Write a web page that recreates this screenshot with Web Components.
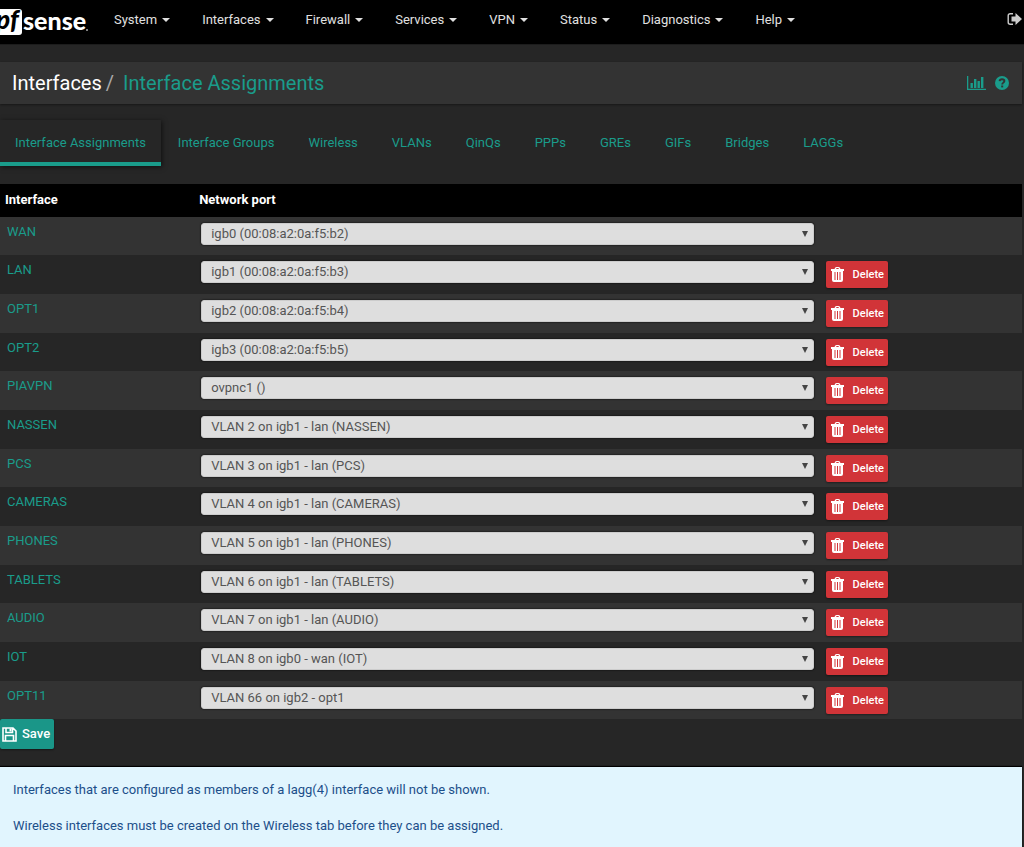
<!DOCTYPE html>
<html lang="en">
<head>
<meta charset="utf-8">
<meta name="viewport" content="width=device-width, initial-scale=1">
<title>Interfaces: Interface Assignments</title>
<style>
  html {
    background: #262626;
  }

  body {
    margin: 0;
    font-family: Roboto, "Liberation Sans", sans-serif;
    font-size: 13px;
    line-height: 18px;
    color: #fff;
    background: #262626;
    overflow-x: hidden;
    --teal: #1a9c8b;
    --panel: #333;
    --red: #d13438;
  }
</style>
</head>
<body>
  <pf-navbar></pf-navbar>

  <pf-page>
    <pf-breadcrumb slot="heading" section="Interfaces" page="Interface Assignments"></pf-breadcrumb>
    <pf-tabs slot="tabs"></pf-tabs>
    <pf-assignments></pf-assignments>
    <pf-button kind="save">Save</pf-button>
    <pf-infobox slot="notes">
      <p>Interfaces that are configured as members of a lagg(4) interface will not be shown.</p>
      <p>Wireless interfaces must be created on the Wireless tab before they can be assigned.</p>
    </pf-infobox>
  </pf-page>

<script>
const RESET = `
  * {
    box-sizing: border-box;
    margin: 0;
    padding: 0;
  }

  a {
    color: inherit;
    text-decoration: none;
  }

  ul {
    list-style: none;
  }

  svg {
    display: block;
    fill: currentColor;
  }
`;

class PfLogo extends HTMLElement {
  constructor() {
    super();
    this.attachShadow({ mode: "open" });
  }

  connectedCallback() {
    this.shadowRoot.innerHTML = `
      <style>
        ${RESET}
        :host {
          display: block;
          width: 92px;
          height: 44px;
        }

        a, svg {
          display: block;
        }

        text {
          font-family: Lato, "Open Sans", sans-serif;
          font-weight: 900;
        }
      </style>
      <a href="#" aria-label="pfsense">
        <svg width="92" height="44" viewBox="0 0 92 44">
          <path fill="#fff" d="M0 9h19q3 0 3 3v20q0 3-3 3H0z"/>
          <text x="-4" y="29" font-size="26" font-style="italic" fill="#000">pf</text>
          <text x="23" y="30" font-size="25" fill="#fff">sense</text>
          <circle cx="87" cy="30" r="1" fill="#aaa"/>
        </svg>
      </a>
    `;
  }
}

class PfNavbar extends HTMLElement {
  constructor() {
    super();
    this.attachShadow({ mode: "open" });
    this.items = ["System", "Interfaces", "Firewall", "Services", "VPN", "Status", "Diagnostics", "Help"];
  }

  connectedCallback() {
    this.shadowRoot.innerHTML = `
      <style>
        ${RESET}
        :host {
          display: block;
          background: #000;
          color: #e0e0e0;
          border-bottom: 1px solid #1c1c1c;
        }

        nav {
          display: flex;
          align-items: flex-start;
          height: 44px;
        }

        ul {
          display: flex;
          flex: 1;
          padding-left: 6px;
        }

        li a {
          display: flex;
          align-items: center;
          gap: 5px;
          padding: 11px 16px;
        }

        .caret {
          border: 4px solid transparent;
          border-top-color: currentColor;
          border-bottom: 0;
          width: 0;
        }

        .logout {
          padding: 12px 2px 0 0;
          color: #ccc;
        }
      </style>
      <nav>
        <pf-logo></pf-logo>
        <ul>
          ${this.items.map((item) => `<li><a href="#">${item}<span class="caret"></span></a></li>`).join("")}
        </ul>
        <a class="logout" href="#" aria-label="Logout">
          <svg width="15" height="14" viewBox="0 0 15 14">
            <path fill="none" stroke="currentColor" stroke-width="1.4" d="M6 1.7H3.2Q1.2 1.7 1.2 3.7v6.6q0 2 2 2H6"/>
            <path d="M4.500 4.600h4V1L15 7l-6.500 6V9.400h-4z"/>
          </svg>
        </a>
      </nav>
    `;
  }
}

class PfPage extends HTMLElement {
  constructor() {
    super();
    this.attachShadow({ mode: "open" });
  }

  connectedCallback() {
    this.shadowRoot.innerHTML = `
      <style>
        ${RESET}
        :host {
          display: block;
          margin-right: 2px;
        }

        header {
          padding-top: 17px;
        }

        .tabs {
          padding-top: 16px;
        }

        .body {
          padding: 18px 0;
        }
      </style>
      <header><slot name="heading"></slot></header>
      <div class="tabs"><slot name="tabs"></slot></div>
      <main class="body"><slot></slot></main>
      <slot name="notes"></slot>
    `;
  }
}

class PfBreadcrumb extends HTMLElement {
  constructor() {
    super();
    this.attachShadow({ mode: "open" });
  }

  connectedCallback() {
    this.shadowRoot.innerHTML = `
      <style>
        ${RESET}
        :host {
          display: flex;
          align-items: center;
          justify-content: space-between;
          height: 42px;
          padding: 0 13px 0 12px;
          background: var(--panel);
          box-shadow: 0 1px 2px rgba(0, 0, 0, 0.4);
        }

        h1 {
          display: flex;
          font-size: 20px;
          font-weight: 400;
          line-height: 28px;
        }

        .sep {
          color: #aaa;
          padding: 0 9px 0 4px;
        }

        .page, .icons {
          color: var(--teal);
        }

        .icons {
          display: flex;
          align-items: center;
          gap: 9px;
        }
      </style>
      <h1>
        <span>${this.getAttribute("section")}</span>
        <span class="sep">/</span>
        <a class="page" href="#">${this.getAttribute("page")}</a>
      </h1>
      <div class="icons">
        <a href="#" aria-label="Status">
          <svg width="19" height="14" viewBox="0 0 19 14">
            <path d="M0 0h1.300v12.700H19V14H0zM3.500 7h2.400v5H3.500zM7 3h2.400v9H7zM10.500 5h2.400v7h-2.400zM14 1h2.400v11H14z"/>
          </svg>
        </a>
        <a href="#" aria-label="Help">
          <svg width="14" height="14" viewBox="0 0 14 14">
            <circle cx="7" cy="7" r="7"/>
            <path fill="none" stroke="#333" stroke-width="1.900" d="M4.600 5.200C4.800 3.700 5.800 3.200 7 3.200c1.400 0 2.400.8 2.400 1.900C9.400 6.600 7.200 6.700 7.200 8.500"/>
            <path fill="#333" d="M6.200 9.500h2v1.900h-2z"/>
          </svg>
        </a>
      </div>
    `;
  }
}

class PfTabs extends HTMLElement {
  constructor() {
    super();
    this.attachShadow({ mode: "open" });
    this.tabs = ["Interface Assignments", "Interface Groups", "Wireless", "VLANs", "QinQs", "PPPs", "GREs", "GIFs", "Bridges", "LAGGs"];
  }

  connectedCallback() {
    this.shadowRoot.innerHTML = `
      <style>
        ${RESET}
        :host {
          display: block;
          color: var(--teal);
        }

        ul {
          display: flex;
        }

        li a {
          display: block;
          padding: 14px 17px 10px;
          border-bottom: 4px solid transparent;
        }

        li:first-child a {
          padding-left: 15px;
          padding-right: 15px;
          border-bottom-color: var(--teal);
          box-shadow: 1px 1px 5px rgba(0, 0, 0, 0.6);
        }
      </style>
      <ul>
        ${this.tabs.map((tab) => `<li><a href="#">${tab}</a></li>`).join("")}
      </ul>
    `;
  }
}

class PfButton extends HTMLElement {
  constructor() {
    super();
    this.attachShadow({ mode: "open" });
  }

  connectedCallback() {
    const icons = {
      save: `
        <svg width="15" height="15" viewBox="0 0 15 15">
          <path fill="none" stroke="currentColor" stroke-width="1.600" d="M1 1h10l3 3v10H1zM3.500 14V8.500h8V14M4 1v4.500h6.500V1"/>
          <path d="M7.500 1.500h2v3h-2z"/>
        </svg>`,
      delete: `
        <svg width="13" height="15" viewBox="0 0 13 15">
          <path fill-rule="evenodd" d="M3.500 2q.5-2 2-2h2q1.500 0 2 2H13v2h-1v9q0 2-2 2H3q-2 0-2-2V4H0V2zM5 2h3q-.3-1-1-1H6q-.7 0-1 1zM3.500 5v8h1V5zM6 5v8h1V5zM8.500 5v8h1V5z"/>
        </svg>`
    };
    const kind = this.getAttribute("kind");

    this.shadowRoot.innerHTML = `
      <style>
        ${RESET}
        :host {
          display: block;
        }

        button {
          display: flex;
          align-items: center;
          border: 0;
          border-radius: 2px;
          color: #fff;
          font-family: inherit;
          font-weight: 500;
          line-height: 18px;
          box-shadow: 0 1px 2px rgba(0, 0, 0, 0.4);
        }

        .save {
          gap: 5px;
          height: 30px;
          padding: 0 4px 0 2px;
          font-size: 13px;
          background: #1a9688;
        }

        .delete {
          gap: 9px;
          height: 27px;
          padding: 0 4px 0 5px;
          font-size: 11px;
          background: var(--red);
        }
      </style>
      <button type="button" class="${kind}">${icons[kind]}<slot></slot></button>
    `;
  }
}

class PfAssignments extends HTMLElement {
  constructor() {
    super();
    this.attachShadow({ mode: "open" });
    this.rows = [
      ["WAN", "igb0 (00:08:a2:0a:f5:b2)"],
      ["LAN", "igb1 (00:08:a2:0a:f5:b3)"],
      ["OPT1", "igb2 (00:08:a2:0a:f5:b4)"],
      ["OPT2", "igb3 (00:08:a2:0a:f5:b5)"],
      ["PIAVPN", "ovpnc1 ()"],
      ["NASSEN", "VLAN 2 on igb1 - lan (NASSEN)"],
      ["PCS", "VLAN 3 on igb1 - lan (PCS)"],
      ["CAMERAS", "VLAN 4 on igb1 - lan (CAMERAS)"],
      ["PHONES", "VLAN 5 on igb1 - lan (PHONES)"],
      ["TABLETS", "VLAN 6 on igb1 - lan (TABLETS)"],
      ["AUDIO", "VLAN 7 on igb1 - lan (AUDIO)"],
      ["IOT", "VLAN 8 on igb0 - wan (IOT)"],
      ["OPT11", "VLAN 66 on igb2 - opt1"]
    ];
  }

  row([name, port], index) {
    const id = name.toLowerCase();
    return `
      <tr>
        <td><a id="${id}" href="#">${name}</a></td>
        <td>
          <div class="select">
            <select aria-labelledby="${id}"><option>${port}</option></select>
            <svg width="6" height="6" viewBox="0 0 6 6"><path d="M0 0h6L3 6z"/></svg>
          </div>
        </td>
        <td>${index === 0 ? "" : `<pf-button kind="delete">Delete</pf-button>`}</td>
      </tr>
    `;
  }

  connectedCallback() {
    this.shadowRoot.innerHTML = `
      <style>
        ${RESET}
        :host {
          display: block;
        }

        table {
          width: 100%;
          table-layout: fixed;
          border-collapse: collapse;
        }

        .name {
          width: 19%;
        }

        .action {
          width: 20%;
        }

        th {
          height: 33px;
          padding: 0 5px 2px;
          background: #000;
          font-weight: 700;
          text-align: left;
        }

        td {
          height: 39px;
          padding: 6px 4px 0 7px;
          vertical-align: top;
        }

        td:last-child {
          padding-left: 8px;
        }

        tbody tr:nth-child(3n + 1) td {
          height: 38px;
        }

        tbody tr:nth-child(odd) td {
          background: var(--panel);
        }

        td a {
          color: var(--teal);
        }

        .select {
          display: grid;
          align-items: center;
          color: #444;
        }

        select {
          grid-area: 1 / 1;
          appearance: none;
          width: 100%;
          height: 22px;
          padding: 0 9px;
          border: 1px solid #ccc;
          border-radius: 3px;
          background: #dedede;
          color: #555;
          font: inherit;
          box-shadow: 0 0 2px #000;
        }

        .select svg {
          grid-area: 1 / 1;
          justify-self: end;
          margin-right: 6px;
          pointer-events: none;
        }
      </style>
      <table>
        <colgroup>
          <col class="name">
          <col>
          <col class="action">
        </colgroup>
        <thead>
          <tr><th>Interface</th><th>Network port</th><th></th></tr>
        </thead>
        <tbody>
          ${this.rows.map((row, i) => this.row(row, i)).join("")}
        </tbody>
      </table>
    `;
  }
}

class PfInfobox extends HTMLElement {
  constructor() {
    super();
    this.attachShadow({ mode: "open" });
  }

  connectedCallback() {
    this.shadowRoot.innerHTML = `
      <style>
        :host {
          display: block;
          padding: 14px 13px;
          background: #e1f5fe;
          color: #1c4f8a;
          box-shadow: 0 -1px 1px #000;
        }

        ::slotted(p) {
          margin: 0 0 18px;
        }
      </style>
      <slot></slot>
    `;
  }
}

customElements.define("pf-logo", PfLogo);
customElements.define("pf-navbar", PfNavbar);
customElements.define("pf-page", PfPage);
customElements.define("pf-breadcrumb", PfBreadcrumb);
customElements.define("pf-tabs", PfTabs);
customElements.define("pf-button", PfButton);
customElements.define("pf-assignments", PfAssignments);
customElements.define("pf-infobox", PfInfobox);
</script>
</body>
</html>
